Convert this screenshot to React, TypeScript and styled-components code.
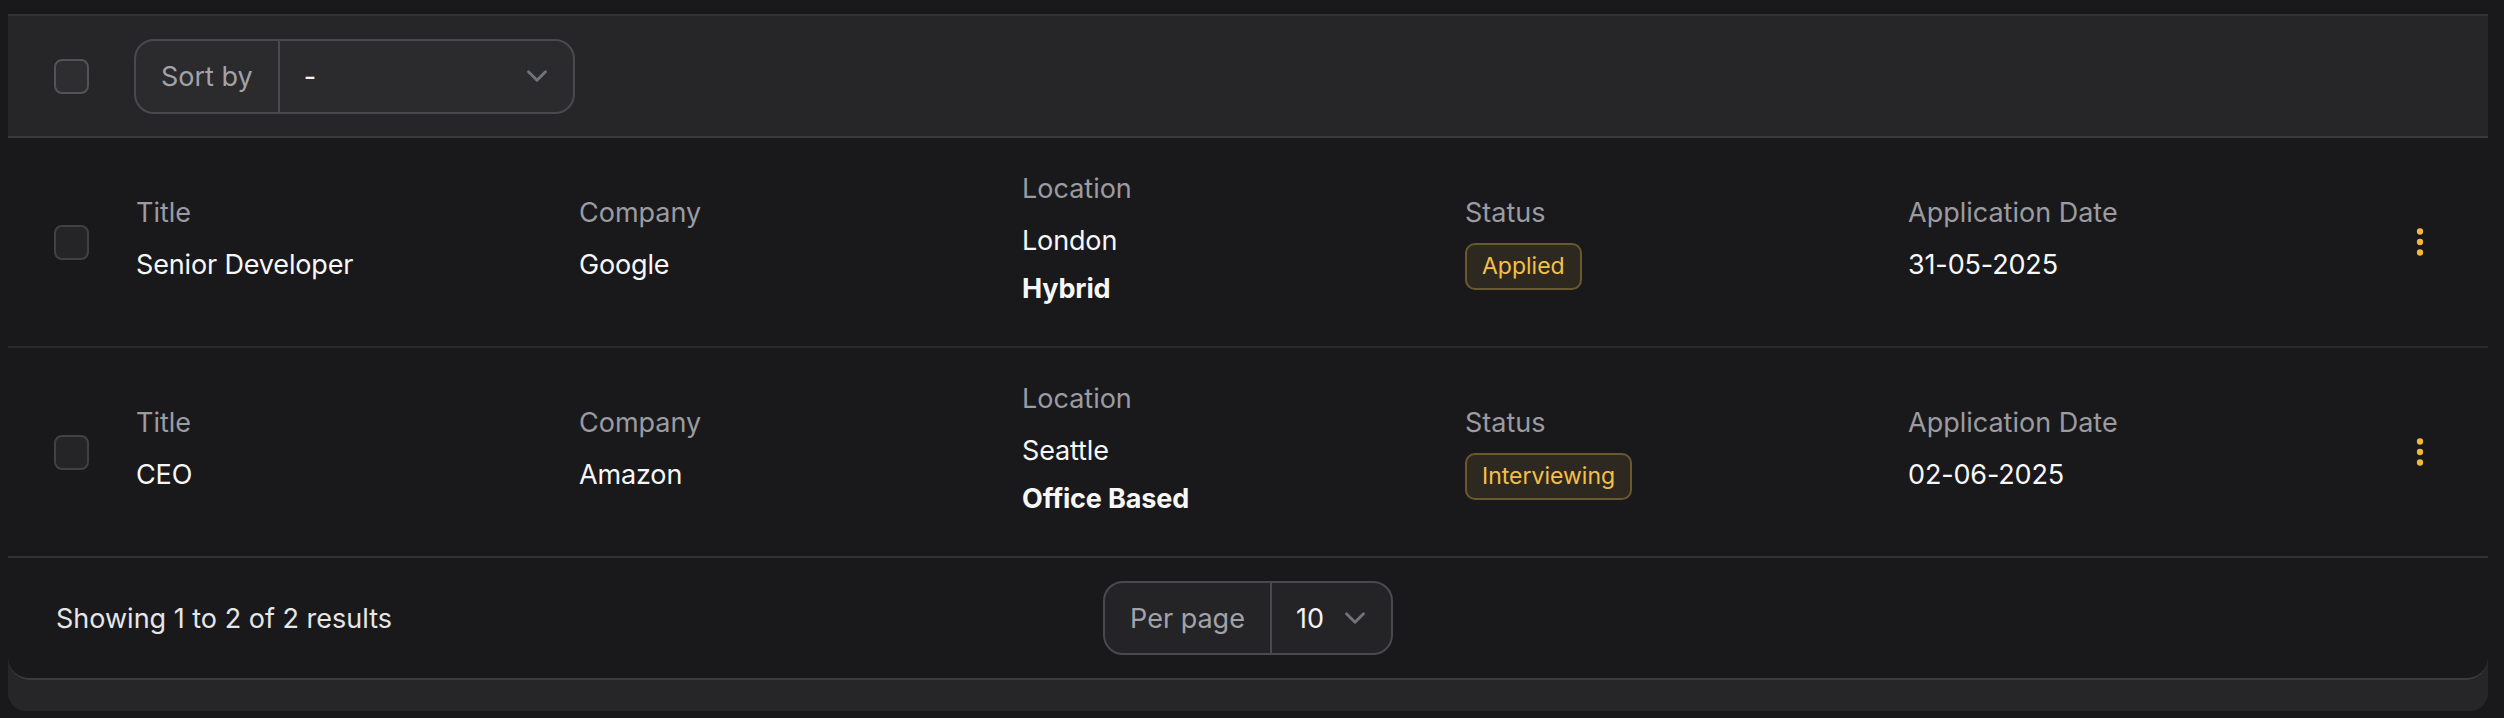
import React from "react";
import styled, { createGlobalStyle } from "styled-components";
import { ChevronDown, EllipsisVertical } from "lucide-react";

interface Application {
  title: string;
  company: string;
  city: string;
  mode: string;
  status: string;
  date: string;
}

const applications: Application[] = [
  {
    title: "Senior Developer",
    company: "Google",
    city: "London",
    mode: "Hybrid",
    status: "Applied",
    date: "31-05-2025",
  },
  {
    title: "CEO",
    company: "Amazon",
    city: "Seattle",
    mode: "Office Based",
    status: "Interviewing",
    date: "02-06-2025",
  },
];

const GlobalStyle = createGlobalStyle`
  * { box-sizing: border-box; }
  body {
    margin: 0;
    background: #19191b;
    font-family: Inter, "Noto Sans", sans-serif;
    color: #f4f4f5;
  }
`;

const App: React.FC = () => {
  return (
    <Page>
      <GlobalStyle />
      <Card>
        <Toolbar>
          <Checkbox $bright />
          <Select>
            <SelectLabel>Sort by</SelectLabel>
            <SelectValue $width={293}>
              <span>-</span>
              <ChevronDown size={34} color="#71737c" strokeWidth={2} />
            </SelectValue>
          </Select>
        </Toolbar>
        <Body>
          {applications.map((app, index) => (
            <Row key={index}>
              <Checkbox />
              <Columns>
                <Cell>
                  <Label>Title</Label>
                  <Value>{app.title}</Value>
                </Cell>
                <Cell>
                  <Label>Company</Label>
                  <Value>{app.company}</Value>
                </Cell>
                <Cell>
                  <Label>Location</Label>
                  <Stack>
                    <Value>{app.city}</Value>
                    <Value $bold>{app.mode}</Value>
                  </Stack>
                </Cell>
                <StatusCell>
                  <Label>Status</Label>
                  <Badge>{app.status}</Badge>
                </StatusCell>
                <Cell>
                  <Label>Application Date</Label>
                  <Value>{app.date}</Value>
                </Cell>
              </Columns>
              <MenuButton>
                <EllipsisVertical size={36} color="#f4b93a" strokeWidth={2.2} />
              </MenuButton>
            </Row>
          ))}
          <Footer>
            <Summary>Showing 1 to 2 of 2 results</Summary>
            <Select>
              <SelectLabel>Per page</SelectLabel>
              <SelectValue $gap={14}>
                <span>10</span>
                <ChevronDown size={34} color="#71737c" strokeWidth={2} />
              </SelectValue>
            </Select>
            <div />
          </Footer>
        </Body>
      </Card>
    </Page>
  );
};

export default App;

const Page = styled.div`
  padding: 14px 16px 8px 8px;
`;

const Card = styled.div`
  background: #262628;
  border-top: 2px solid #333336;
  border-radius: 0 0 18px 18px;
  padding-bottom: 31px;
`;

const Toolbar = styled.div`
  display: flex;
  align-items: center;
  gap: 45px;
  height: 122px;
  padding-left: 46px;
  border-bottom: 2px solid #3a3a3d;
`;

const Checkbox = styled.div<{ $bright?: boolean }>`
  width: 35px;
  height: 35px;
  flex-shrink: 0;
  border-radius: 8px;
  background: ${(p) => (p.$bright ? "#2e2e31" : "#252528")};
  border: 2px solid ${(p) => (p.$bright ? "#535357" : "#414144")};
`;

const Select = styled.div`
  display: flex;
  align-items: stretch;
  height: 75px;
  border: 2px solid #4a4a4e;
  border-radius: 20px;
  background: #2b2b2e;
  font-size: 27px;
  overflow: hidden;
`;

const SelectLabel = styled.div`
  display: flex;
  align-items: center;
  padding: 0 25px;
  color: #a2a2a8;
  border-right: 2px solid #4a4a4e;
`;

const SelectValue = styled.div<{ $width?: number; $gap?: number }>`
  display: flex;
  align-items: center;
  justify-content: space-between;
  gap: ${(p) => p.$gap ?? 18}px;
  width: ${(p) => (p.$width ? `${p.$width}px` : "auto")};
  padding: 0 19px 0 24px;
  color: #f4f4f5;
  svg {
    display: block;
  }
`;

const Body = styled.div`
  background: #19191b;
  border-bottom: 2px solid #3c3c3f;
  border-radius: 0 0 22px 22px;
`;

const Row = styled.div`
  display: flex;
  align-items: center;
  height: 210px;
  padding: 0 50px 0 46px;
  border-bottom: 2px solid #29292c;
`;

const Columns = styled.div`
  flex: 1;
  display: grid;
  grid-template-columns: repeat(5, 1fr);
  align-items: center;
  margin-left: 47px;
`;

const Cell = styled.div`
  display: flex;
  flex-direction: column;
  gap: 16px;
  margin-bottom: 7px;
`;

const StatusCell = styled(Cell)`
  gap: 12px;
  margin-bottom: 0;
  align-items: flex-start;
`;

const Stack = styled.div`
  display: flex;
  flex-direction: column;
  gap: 12px;
`;

const Label = styled.div`
  font-size: 27px;
  line-height: 36px;
  color: #9b9ba1;
`;

const Value = styled.div<{ $bold?: boolean }>`
  font-size: 27px;
  line-height: 36px;
  letter-spacing: -0.15px;
  color: #f7f7f8;
  font-weight: ${(p) => (p.$bold ? 700 : 400)};
`;

const Badge = styled.span`
  display: inline-block;
  height: 47px;
  line-height: 43px;
  padding: 0 15px;
  font-size: 23px;
  color: #f5c04a;
  background: #2e2920;
  border: 2px solid #6a5830;
  border-radius: 10px;
`;

const MenuButton = styled.button`
  width: 36px;
  height: 36px;
  margin-left: 51px;
  padding: 0;
  border: none;
  background: transparent;
  display: flex;
  align-items: center;
  justify-content: center;
`;

const Footer = styled.div`
  display: grid;
  grid-template-columns: 1fr auto 1fr;
  align-items: center;
  height: 122px;
  padding: 0 48px;
  margin-top: -2px;
  border-top: 2px solid #333336;
  ${Select} {
    height: 74px;
    background: #242427;
  }
`;

const Summary = styled.div`
  font-size: 27px;
  color: #e6e6e9;
`;
